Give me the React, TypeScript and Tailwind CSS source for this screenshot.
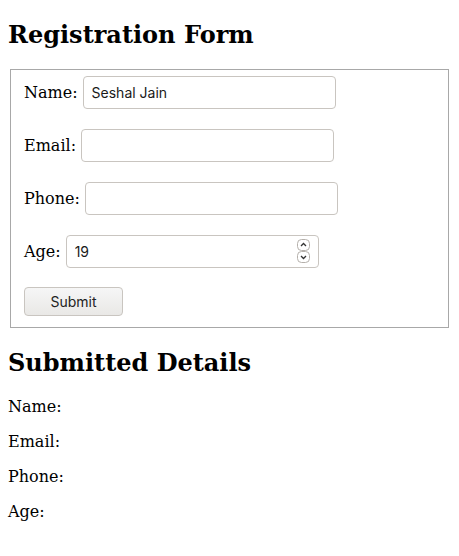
import { useState } from 'react';

const inputCls =
  "h-[33px] w-[253px] rounded-[4px] border border-[#c9c5c0] bg-white px-2 text-[14px] text-[#1a1a1a] outline-none [font-family:Inter,'Liberation_Sans',sans-serif]";

function Stepper() {
  return (
    <div className="absolute right-[9px] top-[4px] flex flex-col">
      <svg width="13" height="12" viewBox="0 0 13 12">
        <rect x="0.5" y="0.5" width="12" height="11" rx="4" fill="white" stroke="#b5b0ab" />
        <path d="M4 7 L6.5 4.5 L9 7" fill="none" stroke="#333" strokeWidth="1.3" />
      </svg>
      <svg width="13" height="12" viewBox="0 0 13 12">
        <rect x="0.5" y="0.5" width="12" height="11" rx="4" fill="white" stroke="#b5b0ab" />
        <path d="M4 5 L6.5 7.5 L9 5" fill="none" stroke="#333" strokeWidth="1.3" />
      </svg>
    </div>
  );
}

export default function App() {
  const [name, setName] = useState('Seshal Jain');
  const [email, setEmail] = useState('');
  const [phone, setPhone] = useState('');
  const [age, setAge] = useState('19');

  return (
    <div className="m-2 text-[16px] text-black [font-family:'DejaVu_Serif',serif]">
      <h2 className="mt-[21px] mb-[20px] text-[24px] font-bold leading-[28px]">Registration Form</h2>

      {/* form */}
      <fieldset className="mx-[2px] border border-[#a8a8a8] px-[13px] pt-[6px] pb-[11px] shadow-[inset_1px_1px_0_#ffffff]">
        <div className="flex flex-col gap-5">
          <div className="flex items-baseline gap-[5px]">
            <label>Name:</label>
            <input className={inputCls} value={name} onChange={(e) => setName(e.target.value)} />
          </div>
          <div className="flex items-baseline gap-[5px]">
            <label>Email:</label>
            <input className={inputCls} value={email} onChange={(e) => setEmail(e.target.value)} />
          </div>
          <div className="flex items-baseline gap-[5px]">
            <label>Phone:</label>
            <input className={inputCls} value={phone} onChange={(e) => setPhone(e.target.value)} />
          </div>
          <div className="flex items-baseline gap-[5px]">
            <label>Age:</label>
            <div className="relative">
              <input className={inputCls} value={age} onChange={(e) => setAge(e.target.value)} />
              <Stepper />
            </div>
          </div>
        </div>
        <button className="mt-[19px] h-[29px] w-[99px] rounded-[4px] border border-[#c9c5c0] bg-gradient-to-b from-[#f6f6f6] to-[#e9e8e6] text-[14px] text-[#222] [font-family:Inter,'Liberation_Sans',sans-serif]">
          Submit
        </button>
      </fieldset>

      {/* submitted */}
      <h2 className="mt-[21px] mb-[20px] text-[24px] font-bold leading-[28px]">Submitted Details</h2>
      <p className="my-4 leading-[19px]">Name: </p>
      <p className="my-4 leading-[19px]">Email: </p>
      <p className="my-4 leading-[19px]">Phone: </p>
      <p className="my-4 leading-[19px]">Age: </p>
    </div>
  );
}
